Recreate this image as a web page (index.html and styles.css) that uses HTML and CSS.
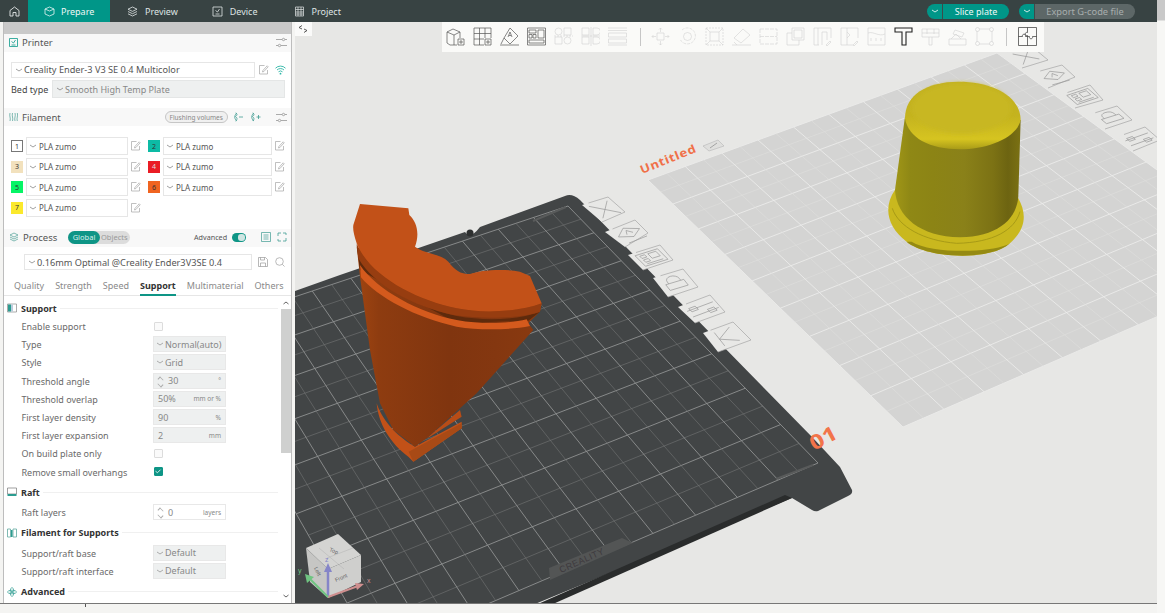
FILE: index.html
```html
<!DOCTYPE html>
<html lang="en">
<head>
<meta charset="utf-8">
<title>Creality Print</title>
<link rel="stylesheet" href="styles.css">
</head>
<body>
<svg class="defs" width="0" height="0" aria-hidden="true">
  <symbol id="chev" viewBox="0 0 8 8"><path d="M1 3l3 2 3-2" fill="none" stroke="currentColor" stroke-width=".8"/></symbol>
  <symbol id="edit" viewBox="0 0 10 10"><path d="M8.500 5v4h-8v-8.500h5M3.500 7l.4-1.500L8.200.8l1 1L4.900 6.500z" fill="none" stroke="#a5a5a5" stroke-width=".7"/></symbol>
  <symbol id="tune" viewBox="0 0 11 11"><path d="M0 2.500h6M9 2.500h2M0 8.500h2M5 8.500h6" fill="none" stroke="#8a8a8a" stroke-width=".7"/><circle cx="7.500" cy="2.500" r="1.200" fill="none" stroke="#8a8a8a" stroke-width=".7"/><circle cx="3.500" cy="8.500" r="1.200" fill="none" stroke="#8a8a8a" stroke-width=".7"/></symbol>
</svg>
<div class="app">
  <div class="window">
    <header class="topbar">
      <div class="home"><svg width="11" height="11" viewBox="0 0 11 11"><path d="M1 10V4.500L5.500 1 10 4.500V10H7V6.500H4V10z" fill="none" stroke="#e4e8e8" stroke-width=".9"/></svg></div>
      <div class="tab tab-active"><svg width="11" height="11" viewBox="0 0 11 11"><path d="M5.500 1l4.500 2v5l-4.500 2L1 8V3zM1 3l4.500 2L10 3" fill="none" stroke="#e6f5f3" stroke-width=".8"/></svg><span>Prepare</span></div>
      <div class="tab tab-preview"><svg width="11" height="11" viewBox="0 0 11 11"><path d="M5.500 1L10 3.200 5.500 5.400 1 3.200zM1 5.500l4.500 2.200L10 5.500M1 7.800L5.500 10 10 7.800" fill="none" stroke="#dfe4e4" stroke-width=".8"/></svg><span>Preview</span></div>
      <div class="tab tab-device"><svg width="11" height="11" viewBox="0 0 11 11"><path d="M1 1h9v9H1zM3.500 4.500l2 1.500 2-3M3.500 8h4" fill="none" stroke="#dfe4e4" stroke-width=".8"/></svg><span>Device</span></div>
      <div class="tab tab-project"><svg width="11" height="11" viewBox="0 0 11 11"><path d="M1.500 1h8v9h-8zM1.500 3.500h8M1.500 6h8M1.500 8h8M4 1v9M7 1v9" fill="none" stroke="#dfe4e4" stroke-width=".7"/></svg><span>Project</span></div>
      <div class="top-actions">
        <div class="split"><span class="split-arrow"><svg width="8" height="8"><use href="#chev"/></svg></span><span class="split-main slice">Slice plate</span></div>
        <div class="split"><span class="split-arrow"><svg width="8" height="8"><use href="#chev"/></svg></span><span class="split-main export">Export G-code file</span></div>
      </div>
    </header>

    <main class="workspace">
      <aside class="panel">
        <div class="panel-cap"></div>

        <div class="section-head head-lift">
          <svg class="head-icon" width="9" height="9" viewBox="0 0 9 9"><path d="M.5.500h8v8h-8zM2.500 3.500l2 1.500 2-3M2.500 7h4" fill="none" stroke="#0d9a8a" stroke-width=".8"/></svg>
          <span class="head-title">Printer</span>
          <svg class="tune" width="11" height="11"><use href="#tune"/></svg>
        </div>
        <div class="printer">
          <div class="printer-row">
            <div class="select printer-select"><svg width="8" height="8"><use href="#chev"/></svg><span>Creality Ender-3 V3 SE 0.4 Multicolor</span></div>
            <svg class="edit" width="10" height="10"><use href="#edit"/></svg>
            <svg class="wifi" width="11" height="10" viewBox="0 0 11 10"><path d="M.5 3.200a7 7 0 0 1 10 0M2 5a5 5 0 0 1 7 0M3.500 6.800a3 3 0 0 1 4 0" fill="none" stroke="#2bb5a5" stroke-width=".9"/><circle cx="5.500" cy="8.700" r=".9" fill="#2bb5a5"/></svg>
          </div>
          <div class="bed-row">
            <span class="bed-label">Bed type</span>
            <div class="select select-filled bed-select"><svg width="8" height="8"><use href="#chev"/></svg><span>Smooth High Temp Plate</span></div>
          </div>
        </div>

        <div class="section-head">
          <svg class="head-icon" width="9" height="10" viewBox="0 0 9 10"><path d="M1 1c-1 3 1 5 0 8M3.500 1c-1 3 1 5 0 8M6 1c1 3-1 5 0 8M8.300 1c1 3-1 5 0 8" fill="none" stroke="#5fa8a0" stroke-width=".8"/></svg>
          <span class="head-title">Filament</span>
          <span class="pill">Flushing volumes</span>
          <svg class="fil-icon first" width="10" height="10" viewBox="0 0 10 10"><path d="M4 1C1 3 1 7 4 9M2.500 1c2 1 2 2 0 3.500 2 1.500 2 3 0 4.500M6 5h4" fill="none" stroke="#3f9c92" stroke-width=".8"/></svg>
          <svg class="fil-icon" width="10" height="10" viewBox="0 0 10 10"><path d="M3 1C0 3 0 7 3 9M1.500 1c2 1 2 2 0 3.500 2 1.500 2 3 0 4.500M5.500 5h4M7.500 3v4" fill="none" stroke="#3f9c92" stroke-width=".8"/></svg>
          <svg class="tune" width="11" height="11"><use href="#tune"/></svg>
        </div>
        <div class="filaments">
          <div class="filament"><span class="swatch sw1">1</span><div class="select"><svg width="8" height="8"><use href="#chev"/></svg><span>PLA zumo</span></div><svg class="edit" width="10" height="10"><use href="#edit"/></svg></div>
          <div class="filament"><span class="swatch sw2">2</span><div class="select"><svg width="8" height="8"><use href="#chev"/></svg><span>PLA zumo</span></div><svg class="edit" width="10" height="10"><use href="#edit"/></svg></div>
          <div class="filament"><span class="swatch sw3">3</span><div class="select"><svg width="8" height="8"><use href="#chev"/></svg><span>PLA zumo</span></div><svg class="edit" width="10" height="10"><use href="#edit"/></svg></div>
          <div class="filament"><span class="swatch sw4">4</span><div class="select"><svg width="8" height="8"><use href="#chev"/></svg><span>PLA zumo</span></div><svg class="edit" width="10" height="10"><use href="#edit"/></svg></div>
          <div class="filament"><span class="swatch sw5">5</span><div class="select"><svg width="8" height="8"><use href="#chev"/></svg><span>PLA zumo</span></div><svg class="edit" width="10" height="10"><use href="#edit"/></svg></div>
          <div class="filament"><span class="swatch sw6">6</span><div class="select"><svg width="8" height="8"><use href="#chev"/></svg><span>PLA zumo</span></div><svg class="edit" width="10" height="10"><use href="#edit"/></svg></div>
          <div class="filament"><span class="swatch sw7">7</span><div class="select"><svg width="8" height="8"><use href="#chev"/></svg><span>PLA zumo</span></div><svg class="edit" width="10" height="10"><use href="#edit"/></svg></div>
        </div>

        <div class="section-head head-lift">
          <svg class="head-icon" width="10" height="10" viewBox="0 0 10 10"><path d="M5 1l4 2-4 2-4-2zM1 5l4 2 4-2M1 7l4 2 4-2" fill="none" stroke="#5fa8a0" stroke-width=".8"/></svg>
          <span class="head-title process-title">Process</span>
          <div class="scope"><span class="scope-on">Global</span><span class="scope-off">Objects</span></div>
          <span class="advanced">Advanced</span>
          <span class="switch"><i></i></span>
          <svg class="proc-icon" width="10" height="10" viewBox="0 0 10 10"><path d="M.5.500h9v9h-9zM2.500 3h5M2.500 5h5M2.500 7h5" fill="none" stroke="#3f9c92" stroke-width=".7"/></svg>
          <svg class="proc-icon proc-last" width="10" height="10" viewBox="0 0 10 10"><path d="M1 4V1h3M9 6v3H6M6 1h3v2M4 9H1V7" fill="none" stroke="#3f9c92" stroke-width=".8"/></svg>
        </div>
        <div class="preset-row">
          <div class="select preset-select"><svg width="8" height="8"><use href="#chev"/></svg><span>0.16mm Optimal @Creality Ender3V3SE 0.4</span></div>
          <svg width="10" height="10" viewBox="0 0 10 10"><path d="M.5.500h7l2 2v7h-9zM2.500 9.500V6h5v3.500M2.500.5V3h4V.5" fill="none" stroke="#999" stroke-width=".7"/></svg>
          <svg class="search" width="10" height="10" viewBox="0 0 10 10"><circle cx="4.500" cy="4.500" r="3.800" fill="none" stroke="#aaa" stroke-width=".8"/><path d="M7.300 7.300L9.500 9.500" stroke="#aaa" stroke-width=".8"/></svg>
        </div>
        <nav class="tabs">
          <span>Quality</span><span>Strength</span><span>Speed</span><span class="tab-on">Support</span><span>Multimaterial</span><span>Others</span>
        </nav>

        <div class="settings">
          <div class="settings-list">
            <div class="group group-first"><svg width="10" height="10" viewBox="0 0 10 10"><path d="M.5 1h9v8h-9z" fill="none" stroke="#888" stroke-width=".7"/><rect x="1" y="1.500" width="3" height="7" fill="#2c9c90"/><rect x="4" y="1.500" width="2" height="7" fill="#bcd"/></svg><b>Support</b><i></i></div>
            <div class="row"><label>Enable support</label><span class="check"></span></div>
            <div class="row"><label>Type</label><div class="field"><svg width="8" height="8"><use href="#chev"/></svg><span>Normal(auto)</span></div></div>
            <div class="row"><label>Style</label><div class="field"><svg width="8" height="8"><use href="#chev"/></svg><span>Grid</span></div></div>
            <div class="row"><label>Threshold angle</label><div class="field spin"><em class="stepper"></em><span class="val">30</span><small>°</small></div></div>
            <div class="row"><label>Threshold overlap</label><div class="field num"><span class="val">50%</span><small>mm or %</small></div></div>
            <div class="row"><label>First layer density</label><div class="field num"><span class="val">90</span><small>%</small></div></div>
            <div class="row"><label>First layer expansion</label><div class="field num"><span class="val">2</span><small>mm</small></div></div>
            <div class="row"><label>On build plate only</label><span class="check"></span></div>
            <div class="row"><label>Remove small overhangs</label><span class="check check-on"><svg width="8" height="8" viewBox="0 0 8 8"><path d="M1.500 4.200l2 1.500 3-3" fill="none" stroke="#fff" stroke-width=".8"/></svg></span></div>
            <div class="group"><svg width="10" height="10" viewBox="0 0 10 10"><path d="M.5 1h9v6h-9z" fill="none" stroke="#777" stroke-width=".7"/><rect x=".5" y="7" width="9" height="2" fill="#2c9c90"/></svg><b>Raft</b><i></i></div>
            <div class="row"><label>Raft layers</label><div class="field spin field-white"><em class="stepper"></em><span class="val">0</span><small>layers</small></div></div>
            <div class="group"><svg width="10" height="10" viewBox="0 0 10 10"><path d="M.5 1h3v8h-3zM6 1h3.500v8H6z" fill="none" stroke="#5fa8a0" stroke-width=".8"/><rect x="4" y="2" width="1.500" height="7" fill="#2c9c90"/></svg><b>Filament for Supports</b><i></i></div>
            <div class="row"><label>Support/raft base</label><div class="field"><svg width="8" height="8"><use href="#chev"/></svg><span>Default</span></div></div>
            <div class="row"><label>Support/raft interface</label><div class="field"><svg width="8" height="8"><use href="#chev"/></svg><span>Default</span></div></div>
            <div class="group group-last"><svg width="10" height="10" viewBox="0 0 10 10"><ellipse cx="5" cy="5" rx="4.500" ry="1.800" fill="none" stroke="#2c9c90" stroke-width=".7"/><ellipse cx="5" cy="5" rx="1.800" ry="4.500" fill="none" stroke="#2c9c90" stroke-width=".7"/><circle cx="5" cy="5" r="1" fill="#2c9c90"/></svg><b>Advanced</b><i></i></div>
          </div>
          <div class="scrollbar">
            <svg class="sb-arrow" width="8" height="8" viewBox="0 0 8 8"><path d="M1.500 5L4 3l2.500 2" fill="none" stroke="#555" stroke-width=".9"/></svg>
            <div class="sb-thumb"></div>
            <svg class="sb-arrow sb-down" width="8" height="8" viewBox="0 0 8 8"><path d="M1.500 3L4 5l2.500-2" fill="none" stroke="#555" stroke-width=".9"/></svg>
          </div>
        </div>
      </aside>

      <section class="viewport">
        <svg class="scene" width="862" height="582" viewBox="295 22 862 582">
          <defs>
            <linearGradient id="cupBody" x1="0" x2="1" y1="0" y2="0">
              <stop offset="0" stop-color="#a09617"/><stop offset=".12" stop-color="#8f8815"/><stop offset=".3" stop-color="#8c8415"/><stop offset=".55" stop-color="#8a8119"/><stop offset=".78" stop-color="#7c7214"/><stop offset=".9" stop-color="#6d6411"/><stop offset="1" stop-color="#7b7113"/>
            </linearGradient>
            <linearGradient id="redBody" x1="0" x2="1" y1="0" y2="0">
              <stop offset="0" stop-color="#a04511"/><stop offset=".12" stop-color="#8e3c10"/><stop offset=".5" stop-color="#80350f"/><stop offset=".75" stop-color="#843710"/><stop offset="1" stop-color="#8a3a10"/>
            </linearGradient>
            <linearGradient id="cupRim" x1="0" x2="0" y1="0" y2="1">
              <stop offset="0" stop-color="#c2b121"/><stop offset=".5" stop-color="#c4b31f"/><stop offset=".85" stop-color="#d6c420"/><stop offset="1" stop-color="#a89b18"/>
            </linearGradient>
            <filter id="soft" x="-10%" y="-10%" width="120%" height="120%"><feGaussianBlur stdDeviation="7"/></filter>
          </defs>
          <rect x="295" y="22" width="862" height="582" fill="#e7e7e5"/>
          <polygon points="648,180 997,53 1283,262 903,427" fill="#d4d4d3"/>
          <g id="ghost-grid"></g>
          <g id="ghost-tabs"></g>
          <text class="plate-name" transform="translate(642,174) rotate(-22) scale(1.15,1)">Untitled</text>
          <polygon points="703,146 718,140 724,146 709,151" fill="#dfdfdd" stroke="#b5b5b5" stroke-width=".6"/>
          <path d="M710 148l7-5" stroke="#888" stroke-width=".7"/>

          <path d="M295 291L340 275 465 232Q470 240 480 227L565 196Q572 193 580 200L813 438 840 467 852 490Q853 494 848 496L818 511Q815 512 812 510L792 498 535 604H295z" fill="#424546"/>
          <polygon points="785,495 792,498 553,604 538,604" fill="#2a2c2c"/>
          <circle cx="470" cy="233" r="3.500" fill="#2e3030"/>
          <g id="bed-grid"></g>
          <path d="M533 221L566 207M776 479L813 465" stroke="#595b5b" stroke-width="2"/>
          <polygon points="549,568 550,580 633,543 622,538" fill="#535555"/>
          <text class="brand" transform="translate(561,573) rotate(-24)">CREALITY</text>
          <g id="bed-tabs"></g>
          <text class="plate-num" transform="translate(814,451) rotate(-28) scale(1.25,1)">01</text>

          <g transform="translate(340,190) scale(.3333)">
            <path d="M110 640C115 700 150 760 205 800L220 815 365 715V695L225 770C180 745 130 700 110 640z" fill="#c25118"/>
            <path d="M206 785L220 815 365 715V700z" fill="#a84a16"/>
            <path d="M260 745L360 660 365 680 270 740z" fill="#b84c16"/>
            <path d="M50 170L60 260 90 480 120 640 160 720 225 770 260 745 410 610 580 420 565 400 600 365 605 340 300 300z" fill="url(#redBody)"/>
            <path d="M50 165C100 290 230 350 350 378 440 395 540 388 600 365L565 392 350 400 60 240z" fill="#5e2a0c"/>
            <path d="M60 225C110 300 240 370 350 390 430 405 510 400 560 388L570 408C510 420 420 422 350 410 230 385 110 320 63 262z" fill="#d45a1d"/>
            <path d="M50 160C90 260 230 330 350 355 430 372 540 365 605 340L600 365C560 380 450 392 340 375 220 350 100 285 55 205z" fill="#973d10"/>
            <path d="M60 42L205 55 208 75C230 95 240 130 225 170 250 190 300 190 325 215 345 240 360 252 390 252 420 240 490 235 540 245L570 258 605 340C540 365 430 372 350 355 230 330 90 260 50 160 42 135 38 120 40 105z" fill="#c25118"/>
          </g>

          <g transform="translate(640,40) scale(.3333)">
            <path d="M765 450C730 500 740 560 800 605 860 655 1050 665 1110 610 1160 565 1160 520 1135 475z" fill="#c9b81e"/>
            <path d="M800 605C860 655 1050 665 1110 610L1100 615C1040 640 870 640 815 605z" fill="#958a12"/>
            <path d="M757 505C775 560 850 602 950 610 1060 608 1125 570 1140 515" fill="none" stroke="#a09414" stroke-width="2.500"/>
            <path d="M795 230L765 450C770 530 840 590 960 592 1070 590 1130 540 1135 470L1142 240z" fill="url(#cupBody)"/>
            <path d="M795 235C795 165 860 125 955 125 1060 125 1142 170 1142 240 1130 295 1040 328 960 328 870 328 805 295 795 235z" fill="url(#cupRim)"/>
            <ellipse cx="965" cy="205" rx="148" ry="76" fill="#c8b723" filter="url(#soft)"/>
          </g>

          <g class="gizmo">
            <polygon points="306,548 338,534 361,555 328,569" fill="#d4d4d2"/>
            <polygon points="306,548 328,569 328,598 310,582" fill="#c6c6c4"/>
            <polygon points="328,569 361,555 361,582 328,598" fill="#cfcfcd"/>
            <path d="M327 558l26-10M319 548l25 21" stroke="#aaa" stroke-width=".4" fill="none"/>
            <text class="cube-label" transform="translate(329,551) rotate(22)">Top</text>
            <text class="cube-label" transform="translate(336,582) rotate(-24)">Front</text>
            <text class="cube-label" transform="translate(314,568) rotate(65)">Left</text>
            <path d="M328 596V567" stroke="#8585c8" stroke-width="2.500"/><polygon points="328,563 324,572 332,572" fill="#8585c8"/>
            <path d="M328 597L358 586" stroke="#cf8f8f" stroke-width="2"/><polygon points="364,584 355,583 357,590" fill="#cf8f8f"/>
            <path d="M328 597L309 578" stroke="#6fc481" stroke-width="2"/><polygon points="305,574 307,583 314,577" fill="#6fc481"/>
            <text class="axis ax-z" x="325" y="562">z</text>
            <text class="axis ax-y" x="298" y="573">y</text>
            <text class="axis ax-x" x="367" y="583">x</text>
          </g>
        </svg>

        <button class="collapse" type="button"><svg width="10" height="8" viewBox="0 0 10 8"><path d="M4 .5L1 2.500 4 4M6 4l3 1.500L6 7.500" fill="none" stroke="#333" stroke-width=".8"/></svg></button>

        <div class="toolbar">
          <svg class="ti" viewBox="0 0 19 19"><path d="M1 5l6-3 7 3v6M1 5v11l3 2h7M1 5l7 3v10M8 8l6-3"/><path d="M12 12h6v6h-6zM15 13v4M13 15h4"/></svg>
          <svg class="ti" viewBox="0 0 19 19"><path d="M1 1h17v10M1 1v17h10M1 6.500h17M1 12h10M6.500 1v17M12 1v10"/><path d="M12 12h6v6h-6zM15 13v4M13 15h4"/></svg>
          <svg class="ti" viewBox="0 0 19 19"><path d="M10 1l8 8-8 8-6-6zM0 18h19M1 17l3-6"/><path d="M8 10l2-5 2 5M9 8.500h2"/></svg>
          <svg class="ti" viewBox="0 0 19 19"><path d="M.5 1h18v17H.5zM2 3h7v3H2zM2 7.500h3V11H2zM6 7.500h3V11H6zM11 3h6v8h-6zM2 13h15v3H2z"/></svg>
          <svg class="ti ti-off" viewBox="0 0 19 19"><circle cx="4.500" cy="4.500" r="3.500"/><path d="M10 1h7v7h-7zM1 10h7v7H1z"/><circle cx="13.500" cy="13.500" r="3.500"/><path d="M0 9h19" stroke-dasharray="2 1"/></svg>
          <svg class="ti ti-off" viewBox="0 0 19 19"><path d="M1 1h7v7H1zM1 10h7v7H1zM12 1h4a3 3 0 0 1 0 7h-4zM12 10h4a3 3 0 0 1 0 7h-4zM0 9h19M10 0v19"/></svg>
          <svg class="ti ti-off" viewBox="0 0 19 19"><path d="M0 1h19M0 3.500h19M.5 6h18v4H.5zM.5 12h18v4H.5zM0 18h19"/></svg>
          <span class="tool-sep"></span>
          <svg class="ti ti-off" viewBox="0 0 19 19"><path d="M6 6h7v7H6zM9.500 1v4M8 2.500L9.500 1 11 2.500M9.500 14v4M8 16.500L9.500 18l1.500-1.500M1 9.500h4M2.500 8L1 9.500 2.500 11M14 9.500h4M16.500 8L18 9.500 16.500 11"/></svg>
          <svg class="ti ti-off" viewBox="0 0 19 19"><path d="M4 3a8 8 0 1 1-2 9" stroke-dasharray="3 1"/><circle cx="9.500" cy="9.500" r="4"/></svg>
          <svg class="ti ti-off" viewBox="0 0 19 19"><path d="M1 1h17v17H1z" stroke-dasharray="2 1"/><path d="M5 5h9v9H5zM1 1l4 4M18 1l-4 4M1 18l4-4M18 18l-4-4"/></svg>
          <svg class="ti ti-off" viewBox="0 0 19 19"><path d="M2 11L11 2l7 6-9 8zM0 18h19M2 15l3 3"/></svg>
          <svg class="ti ti-off" viewBox="0 0 19 19"><path d="M1 2h17v15H1zM1 9.500h17" stroke-dasharray="4 1"/></svg>
          <svg class="ti ti-off" viewBox="0 0 19 19"><path d="M6 1h12v12H6zM1 6h5M1 6v12h12v-5M8 3h8v8H8z"/></svg>
          <svg class="ti ti-off" viewBox="0 0 19 19"><path d="M1 1h17v10M1 1v17h5M5 1v17M9 5v13M9 5h5v8M13 18l4-4 1 1-4 4z"/></svg>
          <svg class="ti ti-off" viewBox="0 0 19 19"><path d="M1 1h6v17H1zM7 1h11v10M7 18h6M13 18l4-4 1 1-4 4zM7 5l3 3-3 3"/></svg>
          <svg class="ti ti-off" viewBox="0 0 19 19"><path d="M1 1h17v17H1zM1 6c6-2 10 4 17 1M4 11v3M9 11v3M14 11v3"/></svg>
          <svg class="ti ti-t" viewBox="0 0 19 19"><path d="M1 1h17v4h-6v13H8V5H1z"/></svg>
          <svg class="ti ti-off" viewBox="0 0 19 19"><path d="M1 2h17v8H1zM8 10v8h3v-8M6 2v5M13 2v5M1 6h17"/></svg>
          <svg class="ti ti-off" viewBox="0 0 19 19"><path d="M1 18h17v-6H1zM3 12l5-5 5 5M7 3l9 3-2 4-9-3z"/></svg>
          <svg class="ti ti-off" viewBox="0 0 19 19"><path d="M4 2h11M4 17h11M2 4v11M17 4v11"/><circle cx="2.500" cy="2.500" r="2"/><circle cx="16.500" cy="2.500" r="2"/><circle cx="2.500" cy="16.500" r="2"/><circle cx="16.500" cy="16.500" r="2"/></svg>
          <span class="tool-sep tool-sep-b"></span>
          <svg class="ti ti-puzzle" viewBox="0 0 19 19"><path d="M.5.500h18v18H.5zM9.500.5v5c-3-1-3 4 0 3v10M.5 9.500h4c-1-3 4-3 3 0h2m0 0h2c-1 3 4 3 3 0h4"/></svg>
        </div>
      </section>
    </main>
    <div class="statusgap"><i></i></div>
  </div>
  <div class="edge"></div>
</div>
<script src="grid.js"></script>
</body>
</html>
```

FILE: styles.css
```css
* { box-sizing: border-box; }
html, body { margin: 0; padding: 0; }
body {
  width: 1165px; height: 613px; overflow: hidden; background: #f4f4f2;
  font-family: "Noto Sans", "Liberation Sans", sans-serif; font-size: 9px; color: #555;
}
.defs { position: absolute; }
svg { display: block; flex: none; }
.app { display: flex; height: 613px; }
.window { width: 1157px; display: flex; flex-direction: column; }
.edge { flex: 1; background: linear-gradient(#c9c9c9 0, #c9c9c9 20px, #f7f7f5 21px); }

/* top bar */
.topbar { height: 22px; background: #384343; display: flex; align-items: center; color: #dfe4e4; font-size: 9px; flex: none; }
.home { width: 28px; height: 22px; display: flex; align-items: center; justify-content: center; }
.tab { display: flex; align-items: center; gap: 7px; height: 22px; }
.tab-active { width: 82px; background: #009688; color: #eef8f6; padding-left: 16px; gap: 6px; }
.tab-preview { margin-left: 17px; }
.tab-device { margin-left: 34px; }
.tab-project { margin-left: 36px; }
.top-actions { margin-left: auto; margin-right: 22px; display: flex; gap: 10px; }
.split { display: flex; height: 15px; }
.split-arrow { width: 16px; background: #009688; border-radius: 8px 0 0 8px; color: #fff; display: flex; align-items: center; justify-content: center; border-right: 1px solid #3d4a4a; }
.split-main { border-radius: 0 8px 8px 0; display: flex; align-items: center; justify-content: center; }
.slice { width: 66px; background: #009688; color: #eef8f6; }
.export { width: 100px; background: #5d6767; color: #a8aeae; font-size: 9.300px; }

/* workspace */
.workspace { height: 582px; display: flex; padding-left: 3px; flex: none; border-bottom: 1px solid #777; }
.panel { width: 289px; background: #fff; border: 1px solid #bdbdbd; border-width: 0 1px; display: flex; flex-direction: column; flex: none; }
.panel-cap { height: 12px; background: #c9c9c9; flex: none; }
.section-head { height: 18px; background: #f8f8f8; display: flex; align-items: center; padding-left: 5px; flex: none; }
.head-lift { padding-bottom: 2px; }
.head-icon { margin-right: 4px; }
.head-title { font-size: 9.500px; color: #555; }
.tune { margin-left: auto; margin-right: 4px; }
.pill { margin-left: 104px; width: 63px; height: 12px; border: 1px solid #c6c6c6; border-radius: 6px; background: #f0f0f0; color: #888; font-size: 6.500px; display: flex; align-items: center; justify-content: center; }
.fil-icon { margin-left: 8px; }
.fil-icon.first { margin-left: 5px; }

.select { height: 16px; border: 1px solid #e6e6e6; display: flex; align-items: center; gap: 1px; padding-left: 3px; font-size: 9.200px; color: #555; background: #fff; white-space: nowrap; }
.select svg { color: #888; }
.select-filled { background: #eef0f0; color: #888; border-color: #e4e6e6; }
.printer { height: 56px; padding: 10px 0 0 7px; flex: none; }
.printer-row { display: flex; align-items: center; height: 16px; }
.printer-select { width: 244px; padding-bottom: 1px; }
.printer-row .edit { margin-left: 4px; }
.wifi { margin-left: 6px; }
.bed-row { display: flex; align-items: center; margin-top: 2px; height: 18px; }
.bed-label { width: 41px; color: #444; font-size: 9px; }
.bed-select { width: 233px; height: 18px; font-size: 9px; }

.filaments { display: grid; grid-template-columns: 130px 137px; column-gap: 7px; row-gap: 2.600px; padding: 11px 0 12px 7px; height: 103px; flex: none; align-content: start; }
.filament { display: flex; align-items: center; gap: 3px; height: 18px; }
.filament .select { flex: 1; height: 18px; font-size: 8px; padding-left: 2px; gap: 2px; }
.swatch { width: 12px; height: 12px; font-size: 7px; display: flex; align-items: center; justify-content: center; color: #333; flex: none; }
.sw1 { border: 1px solid #777; background: #fff; }
.sw2 { background: #0dbba5; }
.sw3 { background: #f2e1bd; }
.sw4 { background: #ea1c24; color: #ddd; }
.sw5 { background: #06f566; }
.sw6 { background: #f06420; }
.sw7 { background: #fbe92c; }

.process-title { width: 37px; }
.scope { margin-left: 8px; width: 62px; height: 13px; background: #dcdcdc; border-radius: 7px; display: flex; font-size: 7.500px; align-items: center; }
.scope-on { width: 32px; height: 13px; border-radius: 7px; background: #0e9586; color: #d6efec; display: flex; align-items: center; justify-content: center; }
.scope-off { color: #999; padding-left: 1px; }
.advanced { margin-left: 64px; font-size: 7.200px; color: #555; }
.switch { margin-left: 5px; width: 14px; height: 9px; border-radius: 5px; background: #0e9586; display: flex; align-items: center; justify-content: flex-end; padding-right: 1px; }
.switch i { width: 7px; height: 7px; border-radius: 3px; background: #cfe5e2; }
.proc-icon { margin-left: 15px; }
.proc-last { margin-left: 6px; }

.preset-row { display: flex; align-items: center; gap: 6px; margin-top: 7px; padding-left: 20px; height: 16px; flex: none; }
.preset-select { width: 228px; font-size: 9.200px; }
.preset-row .search { margin-left: 1px; }

.tabs { margin-top: 8px; height: 18px; display: flex; padding-left: 10px; border-bottom: 1px solid #e6e6e6; font-size: 9px; color: #8a8a8a; flex: none; }
.tabs span { margin-right: 11px; line-height: 16px; height: 18px; white-space: nowrap; }
.tabs .tab-on { color: #333; font-weight: 700; border-bottom: 2px solid #0e9586; }

.settings { flex: 1; display: flex; min-height: 0; }
.settings-list { flex: 1; padding-top: 3px; min-width: 0; }
.group { height: 22.400px; display: flex; align-items: center; padding: 1px 0 0 3px; font-size: 9px; color: #333; }
.group-first { height: 18px; padding-top: 0; }
.group-last { height: 23.400px; padding-top: 0; }
.group svg { margin-right: 4px; }
.group b { font-weight: 700; white-space: nowrap; }
.group i { flex: 1; height: 1px; background: #f0f0f0; margin: 0 3px; }
.row { height: 18.200px; display: flex; align-items: center; padding-left: 17.500px; font-size: 9px; color: #6a6a6a; }
.row label { width: 131.500px; white-space: nowrap; flex: none; padding-top: 1px; }
.check { width: 9px; height: 9px; border: 1px solid #dcdcdc; border-radius: 1px; background: #fafafa; margin-left: 1px; display: block; }
.check-on { background: #0e9586; border-color: #0e9586; }
.check-on svg { margin: -1px 0 0 -1px; }
.field { width: 73px; height: 16px; background: #eef0f0; border: 1px solid #e8e8e8; display: flex; align-items: center; gap: 1px; padding-left: 2px; color: #888; font-size: 9px; white-space: nowrap; }
.field svg { color: #999; }
.field small { margin-left: auto; margin-right: 4px; font-size: 6.500px; color: #888; }
.field-white { background: #fff; }
.num { padding-left: 4px; }
.spin .val { margin-left: 3px; }
.stepper { width: 8px; height: 12px; display: block; }
.stepper::before, .stepper::after { content: ""; display: block; width: 4px; height: 4px; border: solid #aaa; border-width: 1px 0 0 1px; transform: rotate(45deg) scaleY(.7); margin: 2px 0 0 2px; }
.stepper::after { transform: rotate(225deg) scaleY(.7); margin-top: 0; }

.scrollbar { width: 10px; display: flex; flex-direction: column; align-items: center; background: #fff; flex: none; }
.sb-arrow { height: 12px; margin-top: 1px; }
.sb-thumb { width: 10px; height: 144px; background: #cfd0cf; }
.sb-down { margin-top: auto; margin-bottom: 1px; }

/* viewport */
.viewport { position: relative; margin-left: 3px; width: 862px; height: 581px; overflow: hidden; flex: none; }
.scene { display: block; }
.plate-name { font-size: 11.500px; font-weight: 700; fill: #f07048; letter-spacing: .6px; font-family: "Noto Sans", sans-serif; }
.plate-num { font-size: 20px; font-weight: 700; fill: #f2744a; font-family: "Noto Sans", sans-serif; }
.brand { font-size: 9px; fill: #3e3a3e; letter-spacing: .5px; font-family: "Liberation Sans", sans-serif; }
.cube-label { font-size: 5.500px; fill: #666; font-family: "Liberation Sans", sans-serif; }
.axis { font-size: 7px; font-family: "Liberation Sans", sans-serif; }
.ax-z { fill: #8585c8; }
.ax-y { fill: #6fc481; }
.ax-x { fill: #cf8f8f; }

.collapse { position: absolute; left: 0; top: 0; width: 17px; height: 14px; border: 0; padding: 0 0 0 3px; background: #fafaf9; }
.toolbar { position: absolute; left: 147px; top: 0; width: 602px; height: 30px; background: #fafaf8; display: flex; align-items: center; padding: 0 0 1px 4px; gap: 8px; }
.ti { width: 19px; height: 19px; fill: none; stroke: #555; stroke-width: .7; }
.ti-off { stroke: #d2d2d2; stroke-width: .6; }
.ti-t { stroke: #222; stroke-width: 1.100; }
.ti-puzzle { stroke: #333; }
.tool-sep { width: 1px; height: 18px; background: #c6c6c6; margin: 0 2px 0 5px; }
.tool-sep-b { margin: 0 3px 0 4px; }

.statusgap { flex: 1; position: relative; background: #f4f4f2; }
.statusgap i { position: absolute; left: 85px; top: 0; width: 1px; height: 3px; background: #555; }
```

FILE: grid.js
```js
// Draws the perspective print-bed grids and the skewed label tabs of the 3D scene.
(function () {
  var NS = "http://www.w3.org/2000/svg";
  function homography(q) {
    var x0 = q[0][0], y0 = q[0][1], x1 = q[1][0], y1 = q[1][1];
    var x2 = q[2][0], y2 = q[2][1], x3 = q[3][0], y3 = q[3][1];
    var dx1 = x1 - x2, dx2 = x3 - x2, sx = x0 - x1 + x2 - x3;
    var dy1 = y1 - y2, dy2 = y3 - y2, sy = y0 - y1 + y2 - y3;
    var d = dx1 * dy2 - dx2 * dy1;
    var g = (sx * dy2 - dx2 * sy) / d, h = (dx1 * sy - sx * dy1) / d;
    var a = x1 - x0 + g * x1, b = x3 - x0 + h * x3, c = x0;
    var e = y1 - y0 + g * y1, f = y3 - y0 + h * y3, k = y0;
    return function (u, v) {
      var w = g * u + h * v + 1;
      return [(a * u + b * v + c) / w, (e * u + f * v + k) / w];
    };
  }
  function line(parent, p, q, color, width) {
    var l = document.createElementNS(NS, "line");
    l.setAttribute("x1", p[0]); l.setAttribute("y1", p[1]);
    l.setAttribute("x2", q[0]); l.setAttribute("y2", q[1]);
    l.setAttribute("stroke", color); l.setAttribute("stroke-width", width);
    parent.appendChild(l);
  }
  function grid(id, quad, nu, nv, minor, major, w, W) {
    var g = document.getElementById(id), H = homography(quad), i, t, big;
    for (i = 0; i <= nu; i++) {
      t = i / nu; big = i % 2 === 0;
      line(g, H(t, 0), H(t, 1), big ? major : minor, big ? W : w);
    }
    for (i = 0; i <= nv; i++) {
      t = i / nv; big = i % 2 === 0;
      line(g, H(0, t), H(1, t), big ? major : minor, big ? W : w);
    }
  }
  grid("bed-grid", [[568, 206], [818, 463], [375, 652], [192, 331]], 16, 20, "#737676", "#8e9191", 0.6, 0.9);
  grid("ghost-grid", [[997, 53], [1283, 262], [903, 427], [648, 180]], 18, 20, "#dfdfde", "#ebebea", 0.6, 0.9);

  var glyphs = [
    "M3 3L17 17M17 3L3 17",
    "M10 3L17 9 10 14 3 9zM4 18H16M8 10L10 6 12 10",
    "M3 3H17V17H3zM10 5H15V11H10zM5 5H8V8H5zM5 10H8V13H5zM5 15H15",
    "M4 15H16V9H4zM6 9V7A4 4 0 0 1 14 7V9",
    "M2 7H18M2 14H18M4 5H8V9H4zM12 12H16V16H12z",
    "M6 3V17M6 10L16 3M6 10L16 17"
  ];
  function tabs(id, list, fill) {
    var g = document.getElementById(id);
    list.forEach(function (t, i) {
      var A = t[0], B = t[1], C = t[2], D = t[3];
      var poly = document.createElementNS(NS, "polygon");
      poly.setAttribute("points", t.map(function (p) { return p.join(","); }).join(" "));
      poly.setAttribute("fill", fill);
      g.appendChild(poly);
      var edge = document.createElementNS(NS, "polyline");
      var start = [A[0] + (B[0] - A[0]) * 0.25, A[1] + (B[1] - A[1]) * 0.25];
      edge.setAttribute("points", [start, B, C, D].map(function (p) { return p.join(","); }).join(" "));
      edge.setAttribute("fill", "none");
      edge.setAttribute("stroke", "#a5a5a5");
      edge.setAttribute("stroke-width", ".7");
      edge.setAttribute("stroke-linejoin", "round");
      g.appendChild(edge);
      var path = document.createElementNS(NS, "path");
      path.setAttribute("d", glyphs[i]);
      path.setAttribute("fill", "none");
      path.setAttribute("stroke", "#969696");
      path.setAttribute("stroke-width", ".7");
      path.setAttribute("vector-effect", "non-scaling-stroke");
      path.setAttribute("transform", "matrix(" + [(B[0] - A[0]) / 20, (B[1] - A[1]) / 20, (D[0] - A[0]) / 20, (D[1] - A[1]) / 20, A[0], A[1]].join(",") + ")");
      g.appendChild(path);
    });
  }
  tabs("bed-tabs", [
    [[582, 205], [608, 197], [625, 212], [602, 222]],
    [[605, 232], [635, 220], [648, 233], [625, 247]],
    [[628, 255], [660, 245], [673, 260], [643, 270]],
    [[653, 278], [683, 269], [698, 287], [668, 297]],
    [[678, 307], [710, 295], [725, 312], [695, 323]],
    [[703, 333], [733, 322], [751, 340], [718, 352]]
  ], "#e8e8e6");
  tabs("ghost-tabs", [
    [[1007, 53], [1030, 45], [1048, 60], [1022, 68]],
    [[1033, 73], [1062, 65], [1075, 77], [1048, 88]],
    [[1060, 95], [1090, 85], [1103, 100], [1075, 108]],
    [[1088, 115], [1117, 106], [1132, 120], [1105, 129]],
    [[1117, 137], [1145, 127], [1160, 140], [1133, 151]]
  ], "#e7e7e5");
})();
```
